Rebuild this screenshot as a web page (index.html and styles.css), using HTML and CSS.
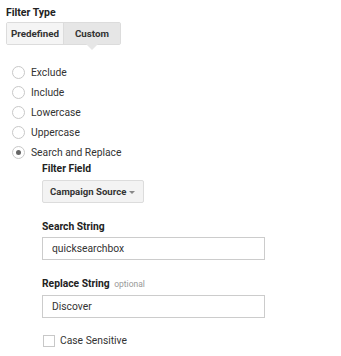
FILE: index.html
```html
<!DOCTYPE html>
<html lang="en">
<head>
    <meta charset="UTF-8">
    <title>Filter Type</title>
    <link rel="stylesheet" href="styles.css">
</head>
<body>
    <div class="filter">
        <h3 class="title">Filter Type</h3>
        <div class="tabs">
            <span class="tab">Predefined</span>
            <span class="tab active">Custom</span>
        </div>

        <ul class="radios">
            <li><span class="radio"></span>Exclude</li>
            <li><span class="radio"></span>Include</li>
            <li><span class="radio"></span>Lowercase</li>
            <li><span class="radio"></span>Uppercase</li>
            <li><span class="radio checked"></span>Search and Replace</li>
        </ul>

        <div class="fields">
            <div class="label">Filter Field</div>
            <div class="select">Campaign Source <span class="caret"></span></div>

            <div class="label gap">Search String</div>
            <div class="input">quicksearchbox</div>

            <div class="label gap">Replace String <span class="optional">optional</span></div>
            <div class="input">Discover</div>

            <div class="check"><span class="box"></span>Case Sensitive</div>
        </div>
    </div>
</body>
</html>
```

FILE: styles.css
```css
body {
    margin: 0;
    font-family: Roboto, 'Liberation Sans', sans-serif;
    font-size: 10.3px;
    color: #333;
    background: #fff;
}
.filter {
    padding: 6px 6px 0 6px;
}
.title {
    margin: 0;
    font-size: 10.5px;
    font-weight: bold;
    line-height: 13px;
    color: #222;
}
.tabs {
    display: inline-flex;
    margin-top: 3px;
    border: 1px solid #dcdcdc;
    border-radius: 2px;
}
.tab {
    position: relative;
    width: 56px;
    height: 21px;
    line-height: 21px;
    text-align: center;
    background: #f5f5f5;
    font-weight: bold;
    font-size: 9.8px;
    color: #333;
}
.tab + .tab {
    border-left: 1px solid #dcdcdc;
}
.tab.active {
    background: #e6e6e6;
}
.tab.active::after {
    content: "";
    position: absolute;
    left: 50%;
    bottom: -6px;
    margin-left: -6px;
    border-left: 6px solid transparent;
    border-right: 6px solid transparent;
    border-top: 6px solid #e6e6e6;
}
.radios {
    list-style: none;
    margin: 17px 0 0 0;
    padding: 0 0 0 6px;
}
.radios li {
    display: flex;
    align-items: center;
    height: 20px;
}
.radio {
    width: 11px;
    height: 11px;
    border: 1px solid #c8c8c8;
    border-radius: 50%;
    margin-right: 6px;
    position: relative;
}
.radio.checked::after {
    content: "";
    position: absolute;
    left: 3px;
    top: 3px;
    width: 5px;
    height: 5px;
    border-radius: 50%;
    background: #666;
}
.fields {
    padding-left: 36px;
}
.label {
    font-weight: bold;
    font-size: 10.3px;
    line-height: 13px;
    margin-top: 0;
    color: #222;
}
.label.gap {
    margin-top: 17px;
}
.optional {
    font-weight: normal;
    font-size: 8.5px;
    color: #999;
    margin-left: 2px;
}
.select {
    display: flex;
    align-items: center;
    justify-content: space-between;
    box-sizing: border-box;
    width: 102px;
    margin-top: 5px;
    height: 23px;
    padding: 0 8px 0 7px;
    background: #f3f3f3;
    border: 1px solid #dcdcdc;
    border-radius: 2px;
    font-weight: bold;
    font-size: 9.6px;
}
.caret {
    border-left: 3px solid transparent;
    border-right: 3px solid transparent;
    border-top: 3px solid #888;
    margin-top: 2px;
}
.input {
    box-sizing: border-box;
    margin-top: 4px;
    width: 223px;
    height: 23px;
    line-height: 21px;
    padding: 0 6px 0 9px;
    border: 1px solid #ccc;
}
.check {
    display: flex;
    align-items: center;
    margin-top: 16px;
    margin-left: 1px;
}
.box {
    width: 10px;
    height: 10px;
    border: 1px solid #c8c8c8;
    margin-right: 5px;
}
```
